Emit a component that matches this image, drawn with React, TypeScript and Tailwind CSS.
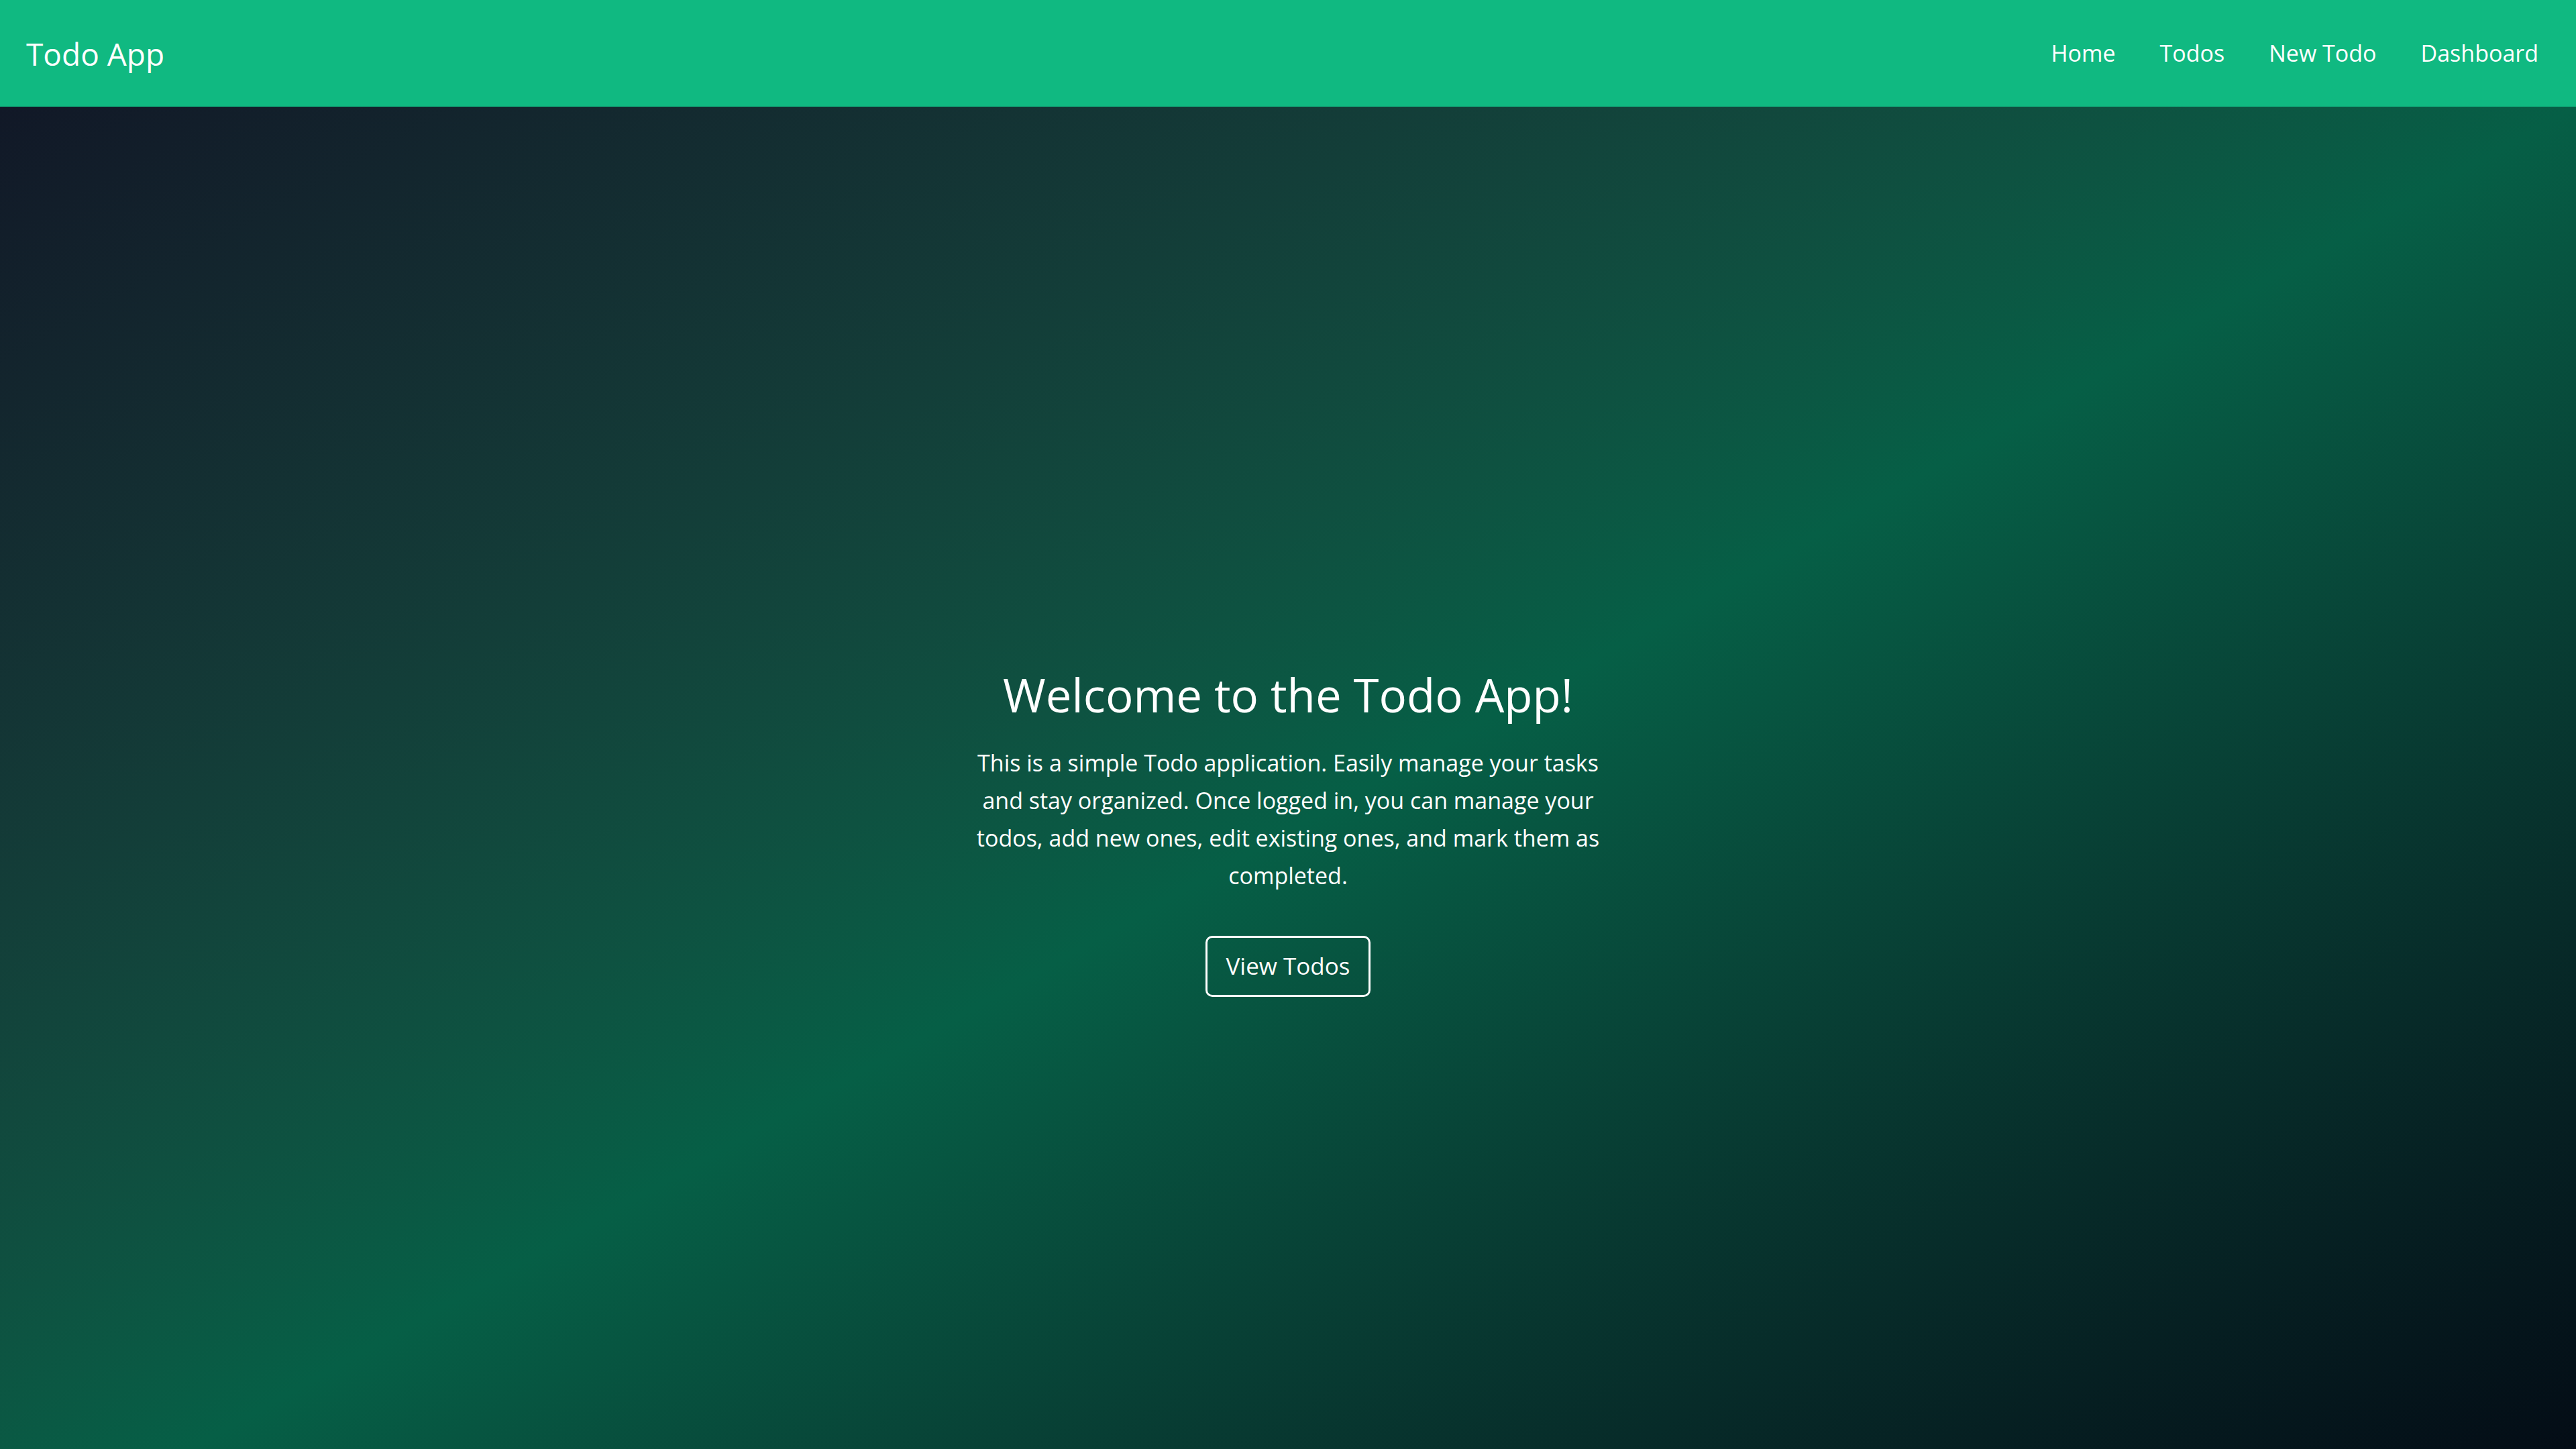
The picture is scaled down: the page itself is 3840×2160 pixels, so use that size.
import React from "react";

export default function App() {
  return (
    <div className="min-h-screen text-white">
      <nav className="flex h-[159px] items-center justify-between bg-[#10b981] pl-[39px] pr-[56px] font-['Open_Sans',sans-serif]">
        <span className="text-[46px] leading-none text-white">Todo App</span>
        <div className="flex items-center gap-[66px] text-[34px] text-white">
          <span>Home</span>
          <span>Todos</span>
          <span>New Todo</span>
          <span>Dashboard</span>
        </div>
      </nav>
      <main className="flex h-[2160px] items-center justify-center bg-linear-to-br from-[#111827] via-[#065f46] to-[#030712] font-['Open_Sans',sans-serif]">
        <div className="flex w-[960px] flex-col items-center text-center">
          <h1 className="text-[69px] leading-[1.25] text-white">Welcome to the Todo App!</h1>
          <p className="mt-[30px] text-[34px] leading-[56px] text-white">
            This is a simple Todo application. Easily manage your tasks and stay organized. Once logged in, you can manage your todos, add new ones, edit existing ones, and mark them as completed.
          </p>
          <button className="mt-[62px] h-[91px] w-[246px] rounded-[10px] border-[3px] border-white text-[35px] text-white">
            View Todos
          </button>
        </div>
      </main>
    </div>
  );
}
